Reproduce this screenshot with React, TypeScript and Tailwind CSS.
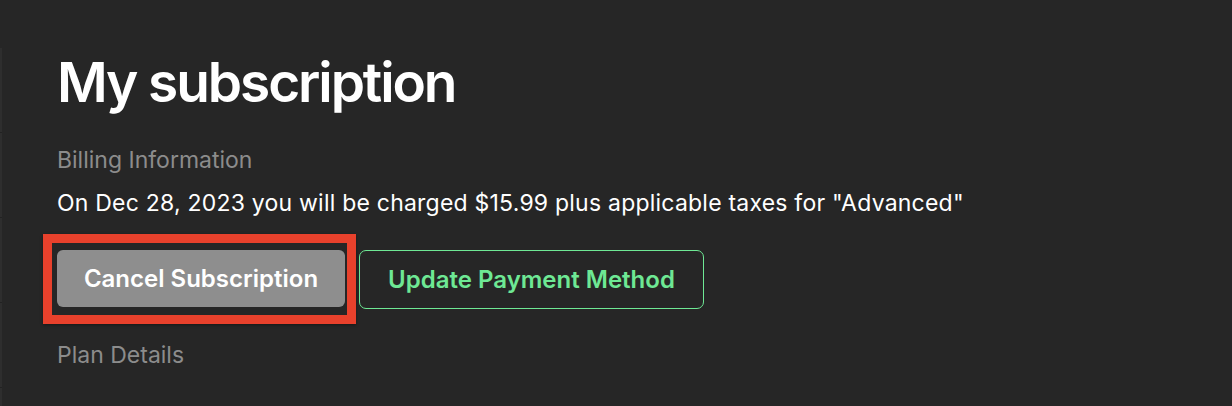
const railSegments = [0, 1, 2, 3, 4];

export default function App() {
  return (
    <div className="flex h-[406px] w-full overflow-hidden bg-[#262626] font-['Inter',sans-serif] text-white">
      <div className="mt-[48px] flex w-[2px] shrink-0 flex-col">
        {railSegments.map((i) => (
          <div key={i} className="h-[85px] shrink-0 border-b border-[#222222] bg-[#2e2e2e]" />
        ))}
      </div>
      <section className="flex flex-col pl-[55px] pt-[50px]">
        <h1 className="text-[55px] font-semibold leading-[64px] tracking-[-2.1px]">My subscription</h1>

        <p className="mt-[32px] text-[23px] leading-[28px] text-[#8c8c8c]">Billing Information</p>
        <p className="mt-[15px] text-[23px] leading-[28px] tracking-[0.22px] text-white">
          On Dec 28, 2023 you will be charged $15.99 plus applicable taxes for "Advanced"
        </p>

        <div className="mt-[33px] flex items-start gap-[14px]">
          <div className="relative">
            <button className="h-[57px] w-[288px] rounded-[6px] bg-[#8e8e8e] text-[24px] font-semibold text-white">
              Cancel Subscription
            </button>
            <div className="pointer-events-none absolute -top-[16px] -right-[11px] -bottom-[17px] -left-[14px] border-[9px] border-[#e8412c] shadow-[0_1px_3px_rgba(0,0,0,0.4)]" />
          </div>
          <button className="h-[59px] w-[345px] rounded-[7px] border border-[#6ee894] text-[24px] font-semibold text-[#6ee894]">
            Update Payment Method
          </button>
        </div>

        <p className="mt-[32px] text-[23px] leading-[28px] text-[#8c8c8c]">Plan Details</p>
      </section>
    </div>
  );
}
